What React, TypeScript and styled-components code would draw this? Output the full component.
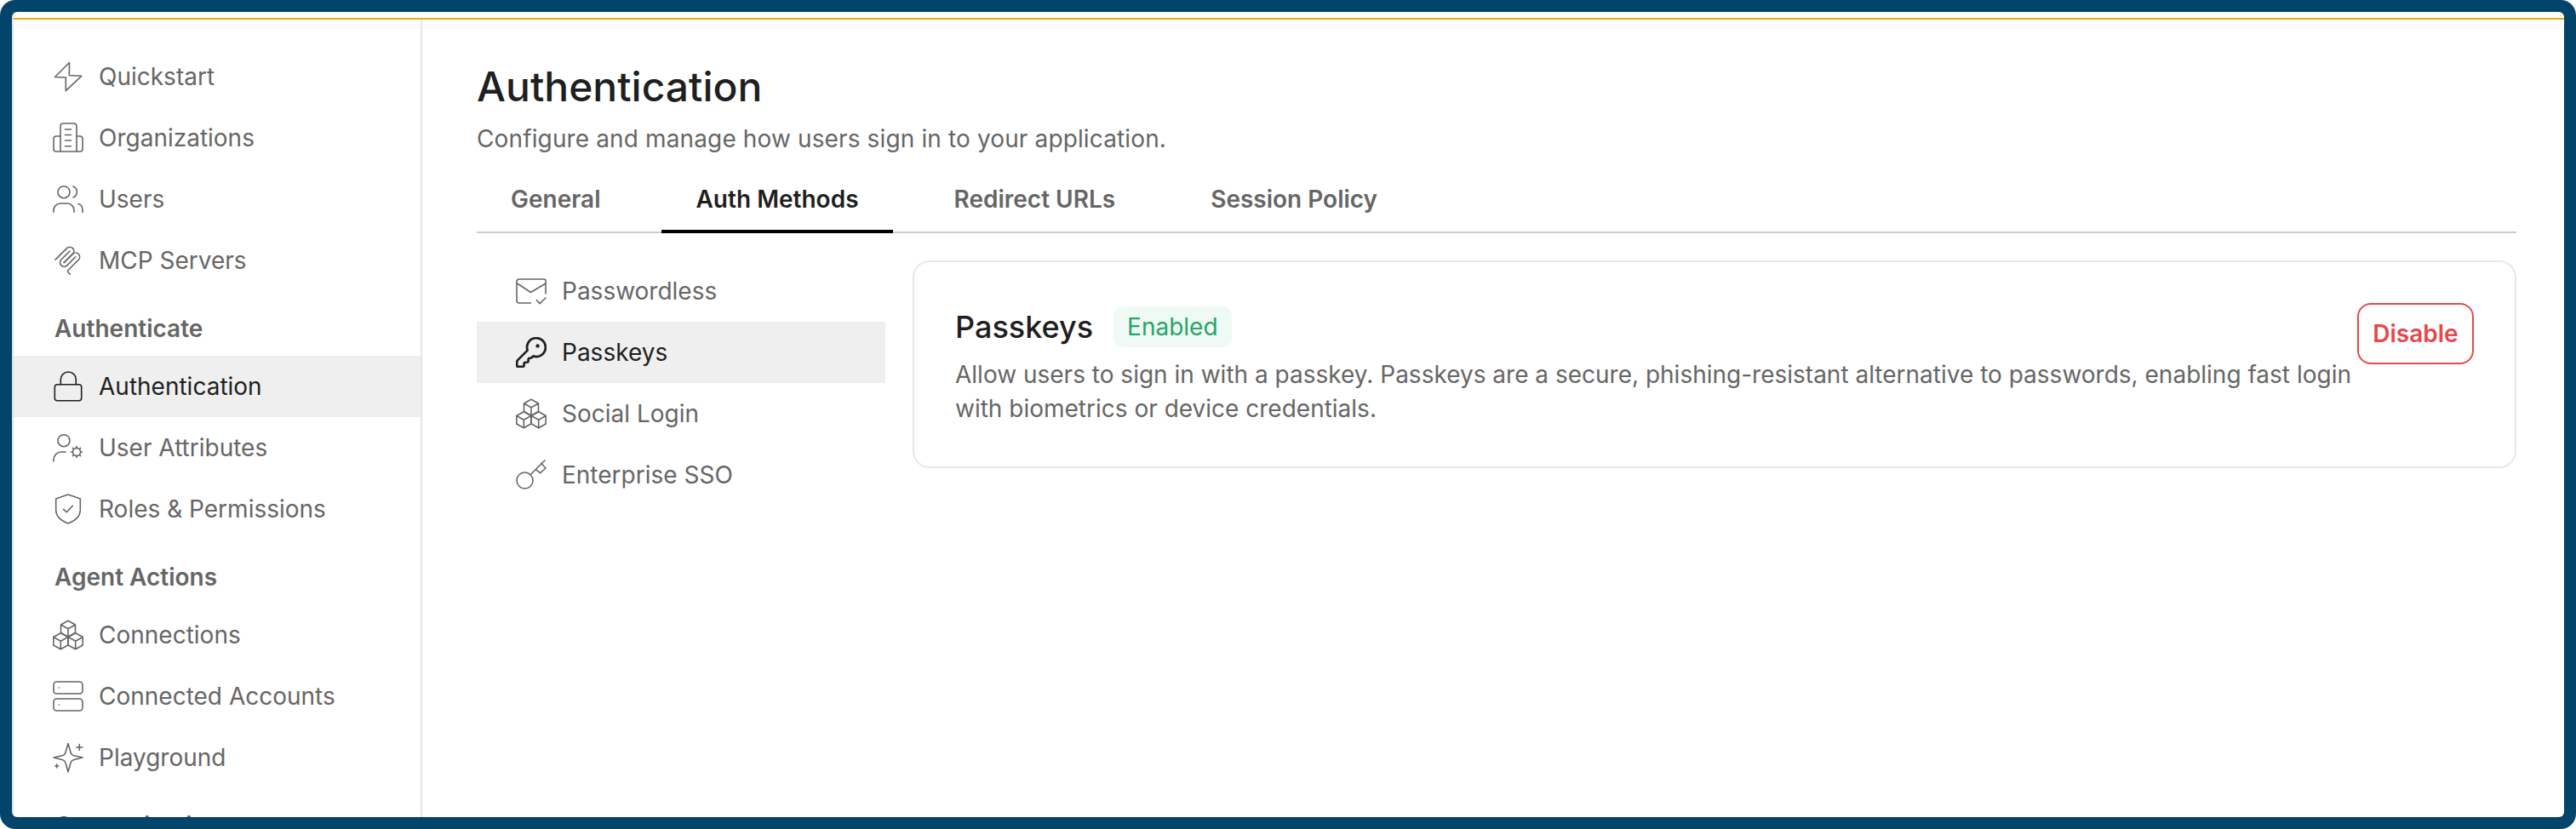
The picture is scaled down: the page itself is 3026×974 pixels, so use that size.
import React from "react";
import styled, { createGlobalStyle } from "styled-components";

const GlobalStyle = createGlobalStyle`
  html, body {
    margin: 0;
    background: #fff;
    overflow: hidden;
  }
  body {
    font-family: Inter, "Liberation Sans", sans-serif;
  }
`;

const Frame = styled.div`
  box-sizing: border-box;
  width: 3026px;
  height: 974px;
  padding: 14px;
  background: #03446b;
  border-radius: 18px;
`;

const Panel = styled.div`
  box-sizing: border-box;
  height: 100%;
  display: flex;
  flex-direction: column;
  padding-top: 7px;
  background: #fff;
  border-left: 2px solid #dfdfd5;
  border-radius: 6px;
  overflow: hidden;
`;

const GoldLine = styled.div`
  flex: none;
  height: 2px;
  background: #e9ad0b;
`;

const Body = styled.div`
  flex: 1;
  min-height: 0;
  display: flex;
`;

const Sidebar = styled.nav`
  box-sizing: border-box;
  flex: none;
  width: 480px;
  padding-top: 31px;
  border-right: 2px solid #e5e5e5;
  overflow: hidden;
`;

const SectionLabel = styled.div`
  box-sizing: border-box;
  height: 76px;
  padding: 28px 0 0 48px;
  font-size: 28px;
  line-height: 32px;
  font-weight: 600;
  color: #666;
`;

const MenuRow = styled.div<{ $active?: boolean }>`
  height: 72px;
  display: flex;
  align-items: center;
  gap: 18px;
  padding-left: 46px;
  font-size: 28px;
  color: ${(p) => (p.$active ? "#1f1f1f" : "#666")};
  background: ${(p) => (p.$active ? "#efefef" : "transparent")};
`;

const Main = styled.main`
  flex: 1;
  min-width: 0;
  padding: 0 56px 0 64px;
`;

const Title = styled.h1`
  margin: 51px 0 0;
  font-size: 48px;
  line-height: 56px;
  font-weight: 500;
  color: #1f1f1f;
`;

const Subtitle = styled.p`
  margin: 13px 0 0;
  font-size: 28px;
  line-height: 40px;
  letter-spacing: 0.13px;
  color: #666;
`;

const TabBar = styled.div`
  display: flex;
  gap: 32px;
  margin-top: 19px;
  border-bottom: 2px solid #ccc;
`;

const Tab = styled.div<{ $active?: boolean }>`
  position: relative;
  padding: 16px 40px 22px;
  font-size: 28px;
  line-height: 32px;
  font-weight: 600;
  color: ${(p) => (p.$active ? "#1f1f1f" : "#666")};

  ${(p) =>
    p.$active &&
    `&::after {
      content: "";
      position: absolute;
      left: 0;
      right: 0;
      bottom: -2px;
      height: 4px;
      background: #000;
    }`}
`;

const Content = styled.div`
  display: flex;
  align-items: flex-start;
  gap: 32px;
  margin-top: 32px;
`;

const SubMenu = styled.div`
  flex: none;
  width: 480px;
`;

const Card = styled.section`
  box-sizing: border-box;
  flex: 1;
  min-width: 0;
  display: flex;
  align-items: flex-start;
  padding: 48px;
  border: 2px solid #e8e8e8;
  border-radius: 20px;
`;

const CardText = styled.div`
  flex: 1;
  min-width: 0;
`;

const CardHeading = styled.div`
  display: flex;
  align-items: center;
  gap: 24px;
  height: 56px;
`;

const CardTitle = styled.h2`
  margin: 0;
  font-size: 36px;
  font-weight: 500;
  color: #1f1f1f;
`;

const Badge = styled.span`
  padding: 0 16px;
  font-size: 28px;
  line-height: 48px;
  color: #27a567;
  background: #f0faf4;
  border-radius: 12px;
`;

const Description = styled.p`
  margin: 8px 0 0;
  font-size: 28px;
  line-height: 40px;
  color: #666;
`;

const DisableButton = styled.button`
  box-sizing: border-box;
  flex: none;
  width: 137px;
  height: 72px;
  padding: 0;
  font-family: inherit;
  font-size: 28px;
  font-weight: 600;
  color: #e5484d;
  background: #fff;
  border: 2px solid #e5484d;
  border-radius: 16px;
`;

const IconSvg = styled.svg.attrs({
  width: 36,
  height: 36,
  fill: "none",
  stroke: "currentColor",
  strokeWidth: 1.6,
  strokeLinecap: "round",
  strokeLinejoin: "round",
})`
  flex: none;
  display: block;
`;

const cube = (c: number, y: number) =>
  `M${c} ${y - 9.5}l8.5 4.75v9.5L${c} ${y + 9.5}l-8.5-4.75v-9.5z` +
  `M${c - 8.5} ${y - 4.75}L${c} ${y}l8.5-4.75M${c} ${y}v9.5`;

const BoltIcon = () => (
  <IconSvg viewBox="0 0 36 36">
    <path d="M19.5 1.5 2.5 18.5 15.3 19v15.7L33.7 17.3 19.3 16.5z" />
  </IconSvg>
);

const BuildingIcon = () => (
  <IconSvg viewBox="0 0 36 36">
    <path d="M9 34V4a3 3 0 0 1 3-3h13a3 3 0 0 1 3 3v30" />
    <path d="M9 16H4a3 3 0 0 0-3 3v12a3 3 0 0 0 3 3h28a3 3 0 0 0 3-3V19a3 3 0 0 0-3-3h-4" />
    <path d="M14.5 8h7M14.5 14.5h7M14.5 21h7M14.5 27.7h7" />
  </IconSvg>
);

const UsersIcon = () => (
  <IconSvg viewBox="0 0 36 36">
    <circle cx="13" cy="9.7" r="7" />
    <path d="M24 3a7 7 0 0 1 0 13" />
    <path d="M1 33.3v-2.3a8 8 0 0 1 8-8h8a8 8 0 0 1 8 8v2.3" />
    <path d="M30 23.5a7 7 0 0 1 5 7v3" />
  </IconSvg>
);

const McpIcon = () => (
  <IconSvg viewBox="0 0 36 36">
    <g transform="translate(-2 -2.4) scale(.2)" strokeWidth="8">
      <path d="M25 97.85 92.88 29.97c9.37-9.37 24.57-9.37 33.94 0 9.37 9.37 9.37 24.57 0 33.94L75.56 115.18" />
      <path d="M76.27 114.47l50.55-50.56c9.37-9.37 24.57-9.37 33.94 0l.36.36c9.37 9.37 9.37 24.57 0 33.94L99.72 159.6c-3.12 3.12-3.12 8.19 0 11.31l12.61 12.61" />
      <path d="M109.85 46.94 59.65 97.15c-9.37 9.37-9.37 24.57 0 33.94 9.37 9.37 24.57 9.37 33.94 0l50.2-50.21" />
    </g>
  </IconSvg>
);

const LockIcon = () => (
  <IconSvg viewBox="0 0 36 36">
    <rect x="2.3" y="15.7" width="31.4" height="19" rx="3" />
    <path d="M9.3 15.7V10a9 9 0 0 1 18 0v5.7" />
  </IconSvg>
);

const UserGearIcon = () => (
  <IconSvg viewBox="0 0 36 36">
    <circle cx="13" cy="9.7" r="7" />
    <path d="M1 34v-2a9 9 0 0 1 9-9h5" />
    <circle cx="28" cy="23" r="4.6" />
    <path d="M28 16.5v1.9M28 27.6v1.9M21.5 23h1.9M32.6 23h1.9M23.4 18.4l1.3 1.3M31.3 26.3l1.3 1.3M23.4 27.6l1.3-1.3M31.3 19.7l1.3-1.3" />
  </IconSvg>
);

const ShieldIcon = () => (
  <IconSvg viewBox="0 0 36 36">
    <path d="M18 1 32.3 6v13c0 8-6.500 13-14.300 16C10.200 32 3.700 27 3.700 19V6z" />
    <path d="M12.500 18.300l3.800 3.400 7-7.500" />
  </IconSvg>
);

const CubesIcon = () => (
  <IconSvg viewBox="0 0 36 36">
    <path d={cube(18, 10.8)} />
    <path d={cube(9.3, 25.2)} />
    <path d={cube(26.7, 25.2)} />
  </IconSvg>
);

const ServersIcon = () => (
  <IconSvg viewBox="0 0 36 36">
    <rect x="1" y="1" width="34" height="14" rx="3.5" />
    <rect x="1" y="21" width="34" height="14" rx="3.5" />
    <path d="M7.300 8h.1M7.300 28h.1" />
  </IconSvg>
);

const SparkleIcon = () => (
  <IconSvg viewBox="0 0 36 36">
    <path d="M18 1.500 21 12c.5 2 1.500 3.200 3.500 3.800L35 18l-10.500 2.700c-2 .5-3 1.500-3.500 3.500L18 35l-3-10.800c-.5-2-1.500-3-3.500-3.500L1 18l10.500-2.200c2-.6 3-1.800 3.500-3.800z" />
    <path d="M31.300 2.500v7M27.800 6h7M4.700 26v4M2.700 28h4" />
  </IconSvg>
);

const MailCheckIcon = () => (
  <IconSvg viewBox="0 0 36 36">
    <path d="M17.500 32H4a3 3 0 0 1-3-3V7a3 3 0 0 1 3-3h29a2 2 0 0 1 2 2v15" />
    <path d="M1.500 9 17.500 19.500 35 9" />
    <path d="M24.500 28.700 28 32.700 35 26" />
  </IconSvg>
);

const KeyRoundIcon = () => (
  <IconSvg viewBox="1.300 1.300 21.400 21.400" strokeWidth="0.950">
    <path d="M2.586 17.414A2 2 0 0 0 2 18.828V21a1 1 0 0 0 1 1h3a1 1 0 0 0 1-1v-1a1 1 0 0 1 1-1h1a1 1 0 0 0 1-1v-1a1 1 0 0 1 1-1h.172a2 2 0 0 0 1.414-.586l.814-.814a6.500 6.500 0 1 0-4-4z" />
    <circle cx="16.500" cy="7.500" r=".5" fill="currentColor" />
  </IconSvg>
);

const SsoKeyIcon = () => (
  <IconSvg viewBox="0 0 36 36">
    <circle cx="10.500" cy="24.500" r="9.500" />
    <path d="M17 17.700 34 1M23.300 11.700l5.300 4L35 10l-5.300-5.700" />
  </IconSvg>
);

const topItems = [
  { label: "Quickstart", icon: <BoltIcon /> },
  { label: "Organizations", icon: <BuildingIcon /> },
  { label: "Users", icon: <UsersIcon /> },
  { label: "MCP Servers", icon: <McpIcon /> },
];

const authItems = [
  { label: "Authentication", icon: <LockIcon />, active: true },
  { label: "User Attributes", icon: <UserGearIcon /> },
  { label: "Roles & Permissions", icon: <ShieldIcon /> },
];

const agentItems = [
  { label: "Connections", icon: <CubesIcon /> },
  { label: "Connected Accounts", icon: <ServersIcon /> },
  { label: "Playground", icon: <SparkleIcon /> },
];

const methods = [
  { label: "Passwordless", icon: <MailCheckIcon /> },
  { label: "Passkeys", icon: <KeyRoundIcon />, active: true },
  { label: "Social Login", icon: <CubesIcon /> },
  { label: "Enterprise SSO", icon: <SsoKeyIcon /> },
];

type Item = { label: string; icon: React.ReactNode; active?: boolean };

const MenuItems = ({ items }: { items: Item[] }) => (
  <>
    {items.map((item) => (
      <MenuRow key={item.label} $active={item.active}>
        {item.icon}
        {item.label}
      </MenuRow>
    ))}
  </>
);

export default function App() {
  return (
    <Frame>
      <GlobalStyle />
      <Panel>
        <GoldLine />
        <Body>
          <Sidebar>
            <MenuItems items={topItems} />
            <SectionLabel>Authenticate</SectionLabel>
            <MenuItems items={authItems} />
            <SectionLabel>Agent Actions</SectionLabel>
            <MenuItems items={agentItems} />
            <SectionLabel>Customization</SectionLabel>
          </Sidebar>
          <Main>
            <Title>Authentication</Title>
            <Subtitle>Configure and manage how users sign in to your application.</Subtitle>
            <TabBar>
              <Tab>General</Tab>
              <Tab $active>Auth Methods</Tab>
              <Tab>Redirect URLs</Tab>
              <Tab>Session Policy</Tab>
            </TabBar>
            <Content>
              <SubMenu>
                <MenuItems items={methods} />
              </SubMenu>
              <Card>
                <CardText>
                  <CardHeading>
                    <CardTitle>Passkeys</CardTitle>
                    <Badge>Enabled</Badge>
                  </CardHeading>
                  <Description>
                    Allow users to sign in with a passkey. Passkeys are a secure, phishing-resistant alternative to
                    passwords, enabling fast login with biometrics or device credentials.
                  </Description>
                </CardText>
                <DisableButton>Disable</DisableButton>
              </Card>
            </Content>
          </Main>
        </Body>
      </Panel>
    </Frame>
  );
}
